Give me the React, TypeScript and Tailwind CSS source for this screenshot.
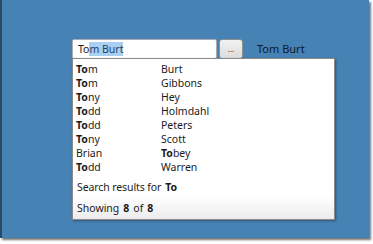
import React from 'react';

const people = [
  { first: 'Tom', last: 'Burt', hit: 'first' },
  { first: 'Tom', last: 'Gibbons', hit: 'first' },
  { first: 'Tony', last: 'Hey', hit: 'first' },
  { first: 'Todd', last: 'Holmdahl', hit: 'first' },
  { first: 'Todd', last: 'Peters', hit: 'first' },
  { first: 'Tony', last: 'Scott', hit: 'first' },
  { first: 'Brian', last: 'Tobey', hit: 'last' },
  { first: 'Todd', last: 'Warren', hit: 'first' },
];

// bold the matched "To" prefix
function Match({ text, on }: { text: string; on: boolean }) {
  if (!on) return <span>{text}</span>;
  return (
    <span>
      <b className="font-bold">{text.slice(0, 2)}</b>
      {text.slice(2)}
    </span>
  );
}

export default function App() {
  return (
    <div
      className="w-[373px] h-[244px] bg-white relative overflow-hidden text-[10.5px] text-[#1b1b1b]"
      style={{ fontFamily: '"Noto Sans", "Open Sans", sans-serif' }}
    >
      {/* window surface with shadow */}
      <div className="w-[369px] h-[238px] bg-[#4682b4] border-l-2 border-[#2c4a66] shadow-[2px_2px_2px_rgba(0,0,0,0.55)] relative">
        <div className="flex items-center pt-[39px] pl-[70px]">
          <div className="w-[145px] h-[20px] bg-white border border-[#abadb3] rounded-[2px] flex items-center pl-[5px] leading-[14px] text-[10.5px]">
            <span>To</span>
            <span className="bg-[#a9cff3] text-[#1d3f6a]">m Burt</span>
          </div>
          <div className="ml-[2px] w-[24px] h-[20px] rounded-[3px] border border-[#8e8f8f] bg-gradient-to-b from-[#f2f2f2] to-[#dcdcdc] flex items-center justify-center text-[8px] leading-none pb-[1px]">
            ...
          </div>
          <div className="ml-[14px] text-[#0e1a28] leading-[14px] text-[11px]">Tom Burt</div>
        </div>

        {/* autocomplete popup */}
        <div className="absolute left-[70px] top-[58px] w-[263px] h-[162px] bg-white border border-[#8a8a8a] shadow-[1px_1px_2px_rgba(0,0,0,0.35)] flex flex-col">
          <div className="pt-[3px]">
            {people.map((p, i) => (
              <div key={i} className="flex h-[14px] items-center leading-[14px] pl-[3px]">
                <div className="w-[85px]">
                  <Match text={p.first} on={p.hit === 'first'} />
                </div>
                <div>
                  <Match text={p.last} on={p.hit === 'last'} />
                </div>
              </div>
            ))}
          </div>
          <div className="mt-[6px] h-[14px] flex items-center pl-[4px] leading-[14px] tracking-[-0.1px]">
            Search results for <b className="font-bold ml-[4px]">To</b>
          </div>
          <div className="mt-auto h-[23px] bg-gradient-to-b from-[#ffffff] to-[#ececec] flex items-center pl-[4px] leading-[14px]">
            Showing <b className="font-bold mx-[4px]">8</b> of <b className="font-bold ml-[4px]">8</b>
          </div>
        </div>
      </div>
    </div>
  );
}
